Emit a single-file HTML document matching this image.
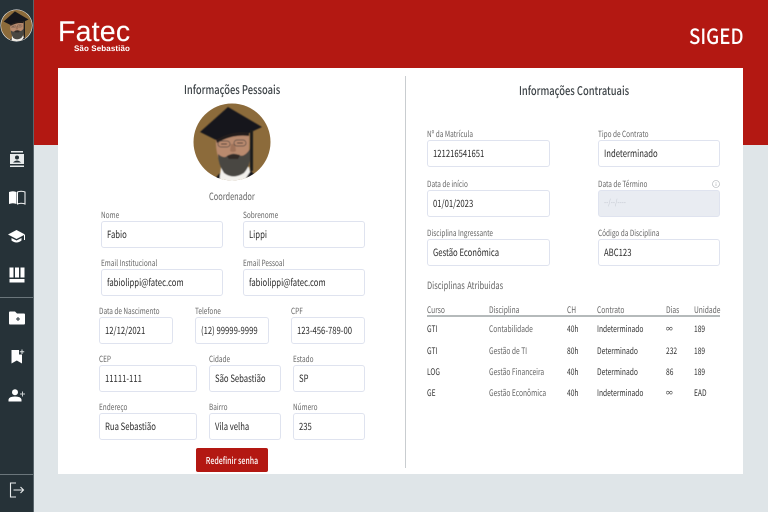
<!DOCTYPE html>
<html lang="pt-BR"><head><meta charset="utf-8"><title>SIGED</title>
<style>
*{box-sizing:border-box}
html,body{margin:0;padding:0}
body{width:768px;height:512px;overflow:hidden;position:relative;background:#dfe5e8;font-family:"Noto Sans CJK JP","Liberation Sans",sans-serif;color:#333;text-rendering:geometricPrecision}
div,span{position:absolute;white-space:nowrap}
.side{left:0;top:0;width:34px;height:512px;background:#263238;border-right:1px solid #59656b}
.top{left:34px;top:0;width:734px;height:145px;background:#b31812}
.card{left:58px;top:68px;width:685px;height:406px;background:#fff}
.vl{left:405px;top:76px;width:1px;height:392px;background:#c9cdd0}
.hl{left:0;width:33px;height:1px;background:#6b767b}
.l,.t,.h,.x{transform-origin:0 0}
.l{font-size:8.5px;line-height:10px;color:#666;transform:scaleX(.76)}
.i{height:27px;background:#fff;border:1px solid #dfe3ef;border-radius:3px;font-size:10px;line-height:25px;color:#2b2b2b}
.i span{left:5px;top:-1px;transform-origin:0 0;transform:scaleX(.77)}
.h{font-size:12px;line-height:14px;font-weight:500;color:#3d4347;transform:scaleX(.78)}
.t{font-size:9px;line-height:10px;color:#333;transform:scaleX(.74)}
.g{color:#666}
svg{position:absolute;overflow:visible}
</style></head><body>
<svg width="0" height="0" style="position:absolute"><defs>
<clipPath id="cp"><circle cx="42" cy="42" r="38.5"/></clipPath>
<filter id="soft" x="-5%" y="-5%" width="110%" height="110%"><feGaussianBlur stdDeviation=".45"/></filter>
<symbol id="who" viewBox="0 0 85 85">
<circle cx="42" cy="42" r="38.5" fill="#8c6b3b"/>
<g clip-path="url(#cp)"><g filter="url(#soft)">
<path d="M20 84 L30 73 L38 84Z M50 84 L60 70 L74 84Z" fill="#17171a"/>
<path d="M29 84 L31 67 H59 L60 72 L52 84Z" fill="#f2f0ec"/>
<path d="M26 36 Q25 54 31 63 Q42 72 57 63 Q60 52 59 32Z" fill="#b98a6e"/>
<path d="M28 54 Q34 59 37 56 Q43 52 49 55 Q54 58 60 49 Q62 64 54 73 Q43 80 34 73 Q28 64 28 54Z" fill="#4a4643"/>
<path d="M37 56 Q43 53 50 55 L48 59 H39Z" fill="#302a28"/>
<path d="M41 44 L40 51 Q43 53 46 51 L45 44Z" fill="#a0735a"/>
<path d="M10 32 L38 7 L72 27 L59 33 Q42 32 26 40Z" fill="#18181c"/>
<path d="M26 40 Q43 30 59 33 L59 36 Q42 34 27 43Z" fill="#241f1d"/>
<rect x="60" y="30" width="3" height="41" fill="#1a1a1e"/>
<rect x="28" y="41" width="12" height="6" rx="3" fill="none" stroke="#4a4340" stroke-width=".7"/>
<rect x="44" y="40" width="12" height="6" rx="3" fill="none" stroke="#4a4340" stroke-width=".7"/>
<path d="M31 44H37M47 43H53" stroke="#3a3230" stroke-width="1"/>
</g></g>
</symbol>
</defs></svg>

<div class="top"></div>
<div class="card"></div>
<div class="vl"></div>

<div class="side"></div>
<div class="hl" style="top:297px"></div>
<div class="hl" style="top:474px"></div>
<svg style="left:0;top:9px" width="33" height="33" viewBox="0 0 33 33"><circle cx="16.5" cy="16.5" r="16" fill="#fff"/><svg x="1" y="1" width="31" height="31" viewBox="3.5 3.5 77 77"><use href="#who" width="85" height="85"/></svg></svg>

<svg style="left:8px;top:150px" width="18" height="18" viewBox="0 0 18 18" fill="#fff"><path d="M3 1H15V2.5H3Z M2 4H16V14H2Z M2 15.5H16V17H2Z" fill="#e8ebec"/><circle cx="9" cy="7.5" r="2" fill="#263238"/><path d="M5 12.5Q9 8.5 13 12.5Z" fill="#263238"/></svg>
<svg style="left:8px;top:190px" width="18" height="15" viewBox="0 0 18 15"><path d="M1 2Q5 .5 8.5 2V14Q5 12.5 1 14Z" fill="#fff"/><path d="M9.5 2Q13 .5 17 2V14Q13 12.5 9.5 14Z" fill="none" stroke="#fff" stroke-width="1"/></svg>
<svg style="left:8px;top:229px" width="18" height="15" viewBox="0 0 18 15" fill="#fff"><path d="M8.5 1 L17 5.5 L8.5 10 L0 5.5Z"/><path d="M3.5 9V11.5Q8.5 15.5 13.5 11.5V9L8.5 11.5Z"/><rect x="16" y="6" width="1" height="5"/></svg>
<svg style="left:9px;top:267px" width="16" height="16" viewBox="0 0 16 16" fill="#fff"><rect x="0.5" y="0.5" width="4" height="10"/><rect x="6" y="0.5" width="4" height="10"/><rect x="11.5" y="0.5" width="4" height="10"/><rect x="0.5" y="12" width="15" height="3.5"/></svg>
<svg style="left:9px;top:311px" width="16" height="14" viewBox="0 0 16 14"><path d="M0 1.5Q0 .5 1 .5H6L8 2.5H15Q16 2.5 16 3.5V12.5Q16 13.5 15 13.5H1Q0 13.5 0 12.5Z" fill="#fff"/><path d="M9 6V10M7 8H11" stroke="#263238" stroke-width="1"/></svg>
<svg style="left:11px;top:349px" width="14" height="15" viewBox="0 0 14 15"><path d="M.5 1H8V5.5H11V14.5L5.8 11.5L.5 14.5Z" fill="#fff"/><path d="M11 .5V5M8.8 2.8H13.2" stroke="#dfe3e4" stroke-width="1"/></svg>
<svg style="left:8px;top:389px" width="18" height="13" viewBox="0 0 18 13" fill="#fff"><circle cx="7" cy="3.2" r="3"/><path d="M.5 12.5V10.5Q1 7.5 7 7.5T13.5 10.5V12.5Z"/><path d="M14.5 2.5V7.5M12 5H17" stroke="#c9cfd1" stroke-width="1"/></svg>
<svg style="left:9px;top:482px" width="16" height="16" viewBox="0 0 16 16" fill="none" stroke="#e8ebec" stroke-width="1.1"><path d="M7 1H1.5V15H7"/><path d="M4.5 8H14.5M11.5 5L14.5 8L11.5 11"/></svg>

<div style="left:58px;top:13px;font:400 28.5px/38px 'Liberation Sans',sans-serif;color:#fff;letter-spacing:.2px;-webkit-text-stroke:.15px #fff">Fatec</div>
<div style="left:74px;top:44px;font:700 8px/10px 'Liberation Sans',sans-serif;color:#fff;letter-spacing:.1px">São Sebastião</div>
<div class="x" style="left:689px;top:22px;font-size:21px;line-height:29px;font-weight:500;color:#fff;transform:scaleX(.89)">SIGED</div>

<div class="h" style="left:184px;top:83px">Informações Pessoais</div>
<div class="h" style="left:519px;top:84px">Informações Contratuais</div>
<svg style="left:190px;top:100px" width="85" height="85" viewBox="0 0 85 85"><use href="#who" width="85" height="85"/></svg>
<div class="x" style="left:209px;top:189.5px;font-size:10px;line-height:11px;color:#666;transform:scaleX(.74)">Coordenador</div>

<div class="l" style="left:101px;top:210px">Nome</div><div class="i" style="left:101px;top:221px;width:122px"><span>Fabio</span></div>
<div class="l" style="left:243px;top:210px">Sobrenome</div><div class="i" style="left:243px;top:221px;width:122px"><span>Lippi</span></div>
<div class="l" style="left:101px;top:258px">Email Institucional</div><div class="i" style="left:101px;top:269px;width:122px"><span>fabiolippi@fatec.com</span></div>
<div class="l" style="left:243px;top:258px">Email Pessoal</div><div class="i" style="left:243px;top:269px;width:122px"><span>fabiolippi@fatec.com</span></div>
<div class="l" style="left:99px;top:306px">Data de Nascimento</div><div class="i" style="left:99px;top:317px;width:74px"><span>12/12/2021</span></div>
<div class="l" style="left:195px;top:306px">Telefone</div><div class="i" style="left:195px;top:317px;width:74px"><span>(12) 99999-9999</span></div>
<div class="l" style="left:291px;top:306px">CPF</div><div class="i" style="left:291px;top:317px;width:74px"><span>123-456-789-00</span></div>
<div class="l" style="left:99px;top:354px">CEP</div><div class="i" style="left:99px;top:365px;width:98px"><span>11111-111</span></div>
<div class="l" style="left:209px;top:354px">Cidade</div><div class="i" style="left:209px;top:365px;width:72px"><span>São Sebastião</span></div>
<div class="l" style="left:293px;top:354px">Estado</div><div class="i" style="left:293px;top:365px;width:72px"><span>SP</span></div>
<div class="l" style="left:99px;top:402px">Endereço</div><div class="i" style="left:99px;top:413px;width:98px"><span>Rua Sebastião</span></div>
<div class="l" style="left:209px;top:402px">Bairro</div><div class="i" style="left:209px;top:413px;width:72px"><span>Vila velha</span></div>
<div class="l" style="left:293px;top:402px">Número</div><div class="i" style="left:293px;top:413px;width:72px"><span>235</span></div>
<div style="left:196px;top:448px;width:72px;height:24px;background:#b31812;border-radius:2px;color:#fff;font-size:9.5px;line-height:24px;font-weight:500"><span style="left:0;top:0;width:72px;text-align:center;transform:scaleX(.74)">Redefinir senha</span></div>

<div class="l" style="left:427px;top:129px">Nº da Matrícula</div><div class="i" style="left:427px;top:140px;width:123px"><span>121216541651</span></div>
<div class="l" style="left:598px;top:129px">Tipo de Contrato</div><div class="i" style="left:598px;top:140px;width:122px"><span>Indeterminado</span></div>
<div class="l" style="left:427px;top:179px">Data de início</div><div class="i" style="left:427px;top:190px;width:123px"><span>01/01/2023</span></div>
<div class="l" style="left:598px;top:179px">Data de Término</div><div class="i" style="left:598px;top:190px;width:122px;background:#e9ecf2;color:#c2c6cf;font-size:8px"><span>--/--/----</span></div>
<svg style="left:712px;top:180px" width="8" height="8" viewBox="0 0 8 8" fill="none" stroke="#a9adb2" stroke-width=".6"><circle cx="4" cy="4" r="3.5"/><path d="M4 3.4V6M4 2V2.7"/></svg>
<div class="l" style="left:427px;top:228px">Disciplina  Ingressante</div><div class="i" style="left:427px;top:239px;width:123px"><span>Gestão Econômica</span></div>
<div class="l" style="left:598px;top:228px">Código da Disciplina</div><div class="i" style="left:598px;top:239px;width:122px"><span>ABC123</span></div>
<div class="x" style="left:427px;top:279px;font-size:10px;line-height:12px;color:#666;word-spacing:1px;transform:scaleX(.75)">Disciplinas Atribuidas</div>

<div class="t g" style="left:427px;top:305px">Curso</div><div class="t g" style="left:489px;top:305px">Disciplina</div><div class="t g" style="left:567px;top:305px">CH</div><div class="t g" style="left:597px;top:305px">Contrato</div><div class="t g" style="left:666px;top:305px">Dias</div><div class="t g" style="left:694px;top:305px">Unidade</div>
<div style="left:427px;top:315px;width:293px;height:1.5px;background:#b5babb"></div>

<div class="t" style="left:427px;top:324px">GTI</div><div class="t g" style="left:489px;top:324px">Contabilidade</div><div class="t" style="left:567px;top:324px">40h</div><div class="t" style="left:597px;top:324px">Indeterminado</div><div class="t" style="left:666px;top:324px">∞</div><div class="t" style="left:694px;top:324px">189</div>
<div class="t" style="left:427px;top:346px">GTI</div><div class="t g" style="left:489px;top:346px">Gestão de TI</div><div class="t" style="left:567px;top:346px">80h</div><div class="t" style="left:597px;top:346px">Determinado</div><div class="t" style="left:666px;top:346px">232</div><div class="t" style="left:694px;top:346px">189</div>
<div class="t" style="left:427px;top:367px">LOG</div><div class="t g" style="left:489px;top:367px">Gestão Financeira</div><div class="t" style="left:567px;top:367px">40h</div><div class="t" style="left:597px;top:367px">Determinado</div><div class="t" style="left:666px;top:367px">86</div><div class="t" style="left:694px;top:367px">189</div>
<div class="t" style="left:427px;top:388px">GE</div><div class="t g" style="left:489px;top:388px">Gestão Econômica</div><div class="t" style="left:567px;top:388px">40h</div><div class="t" style="left:597px;top:388px">Indeterminado</div><div class="t" style="left:666px;top:388px">∞</div><div class="t" style="left:694px;top:388px">EAD</div>
</body></html>
